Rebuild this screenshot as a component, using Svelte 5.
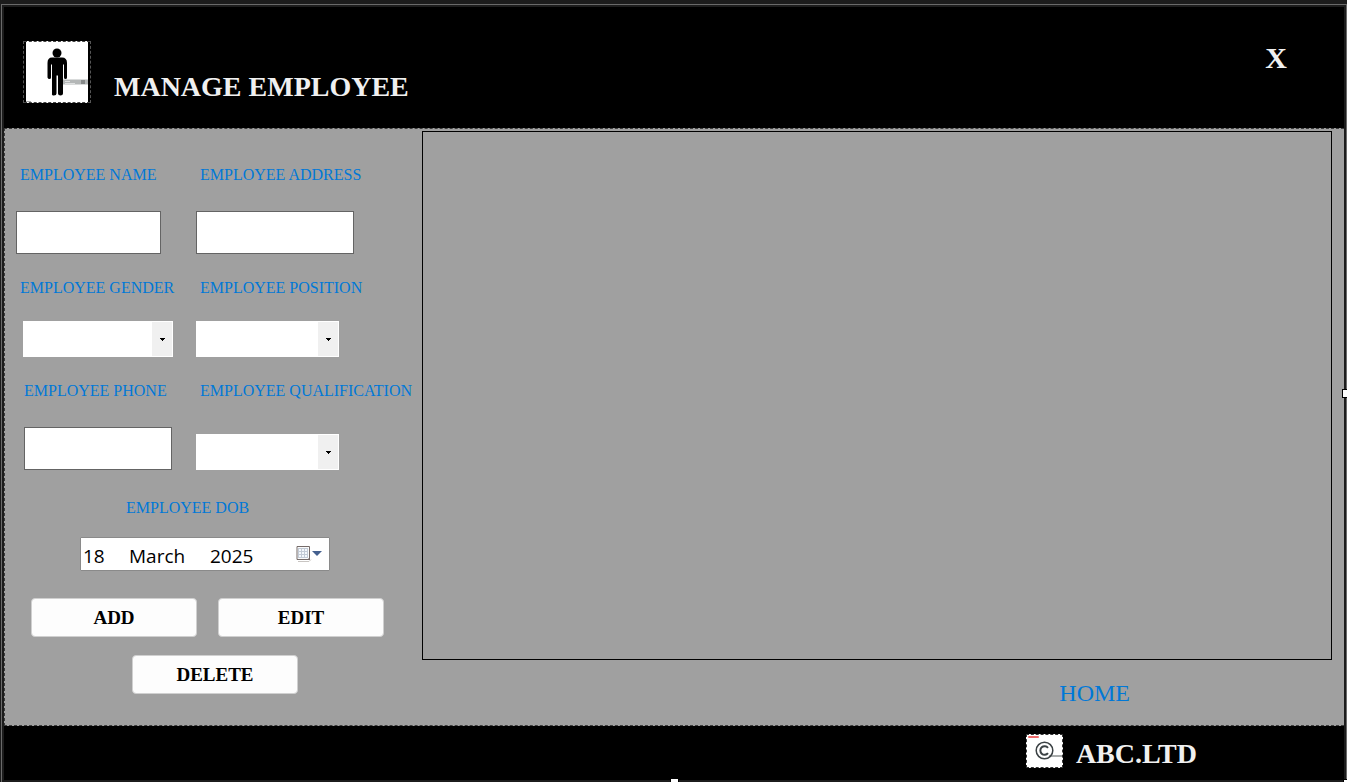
<script>
  let name = $state('');
  let address = $state('');
  let gender = $state('');
  let position = $state('');
  let phone = $state('');
  let qualification = $state('');
  let day = $state('18');
  let month = $state('March');
  let year = $state('2025');
</script>

{#snippet arrow()}
  <svg class="arrow" viewBox="0 0 5 3" width="5" height="3" shape-rendering="crispEdges" aria-hidden="true">
    <path d="M0 0h5v1H4v1H3v1H2V2H1V1H0z" />
  </svg>
{/snippet}

<div class="designer">
  <div class="window">
    <header>
      <div class="logo">
        <svg viewBox="0 0 62 62" width="62" height="62" aria-hidden="true">
          <rect width="62" height="62" fill="#fff" />
          <rect x="37" y="38.500" width="25" height="5" fill="#b4b7b7" />
          <rect x="55" y="39" width="4" height="4" fill="#858888" />
          <path d="M39 40.500h5M39 42.500h10" stroke="#dfe1e1" stroke-width="1" />
          <circle cx="31" cy="12" r="4.500" />
          <path transform="translate(0 .5)" d="M26 16h10q5 0 5 5.500V36q0 1.500-1.500 1.500T38 36V23h-1v29q0 2-2.500 2T32 52V34h-1.500v18q0 2-2.500 2t-2-2V23h-1v13q0 1.500-1.500 1.500T21.500 36V21.500Q21.500 16 26 16z" />
          <path d="M0 60.500h5" stroke="#aaa" />
        </svg>
      </div>
      <h1>MANAGE EMPLOYEE</h1>
      <button class="close" type="button">X</button>
    </header>

    <main>
      <form onsubmit={(e) => e.preventDefault()}>
        <div class="fields">
          <div class="field name">
            <label for="name">EMPLOYEE NAME</label>
            <input id="name" type="text" bind:value={name} />
          </div>
          <div class="field address">
            <label for="address">EMPLOYEE ADDRESS</label>
            <input id="address" type="text" bind:value={address} />
          </div>
          <div class="field gender">
            <label for="gender">EMPLOYEE GENDER</label>
            <span class="combo">
              <select id="gender" bind:value={gender}><option value=""></option></select>
              {@render arrow()}
            </span>
          </div>
          <div class="field">
            <label for="position">EMPLOYEE POSITION</label>
            <span class="combo">
              <select id="position" bind:value={position}><option value=""></option></select>
              {@render arrow()}
            </span>
          </div>
          <div class="field phone">
            <label for="phone">EMPLOYEE PHONE</label>
            <input id="phone" type="text" bind:value={phone} />
          </div>
          <div class="field">
            <label for="qualification">EMPLOYEE QUALIFICATION</label>
            <span class="combo">
              <select id="qualification" bind:value={qualification}><option value=""></option></select>
              {@render arrow()}
            </span>
          </div>
        </div>

        <div class="dob">
          <label for="day">EMPLOYEE DOB</label>
          <div class="picker">
            <input id="day" class="day" type="text" bind:value={day} />
            <input class="month" type="text" bind:value={month} />
            <input class="year" type="text" bind:value={year} />
            <button class="calendar" type="button">
              <svg viewBox="0 0 26 16" width="26" height="16" aria-hidden="true">
                <path d="M2 15.500h11l2-2" fill="none" stroke="#c9c5c2" />
                <path d="M1 .5h12.500v13H1z" fill="#fbfbfb" stroke="#756b69" />
                <rect x="2" y="2" width="10" height="10" fill="#c3cbd6" />
                <path d="M3 3h2v2H3zM6 3h2v2H6zM9 3h2v2H9zM3 6h2v2H3zM6 6h2v2H6zM9 6h2v2H9zM3 9h2v2H3zM6 9h2v2H6zM9 9h2v2H9z" fill="#f4f8fc" />
                <path d="M11 14l3-3v3z" fill="#756b69" />
                <path d="M16 5h10l-5 5z" fill="#44608f" />
              </svg>
            </button>
          </div>
        </div>

        <div class="actions">
          <button type="button">ADD</button>
          <button type="button">EDIT</button>
          <button type="button" class="delete">DELETE</button>
        </div>
      </form>

      <section>
        <div class="grid"></div>
        <a href="#home">HOME</a>
      </section>
    </main>

    <footer>
      <div class="mark">
        <svg viewBox="0 0 35 32" width="35" height="32" aria-hidden="true">
          <rect width="35" height="32" fill="#fff" />
          <rect x="1" y="1" width="11" height="2" rx="1" fill="#ef6a6a" />
          <rect x="22" y="20" width="13" height="2" fill="#a8abab" />
          <circle cx="17.500" cy="15.500" r="8.300" fill="none" stroke="#3b4144" stroke-width="1.500" />
          <path d="M21 12.800a4.300 4.300 0 1 0 0 5.400" fill="none" stroke="#3b4144" stroke-width="2" />
        </svg>
      </div>
      <strong>ABC.LTD</strong>
    </footer>
  </div>
  <i class="handle east"></i>
  <i class="handle south"></i>
  <i class="handle corner"></i>
</div>

<style>
  :global(body) {
    background: #1c1c1c;
  }
  .designer {
    --display: Algerian, "Liberation Serif", serif;
    position: relative;
    box-sizing: border-box;
    min-height: 100vh;
    padding: 4px 0 0 1px;
    display: flex;
    overflow: hidden;
    background: #1c1c1c;
    font-family: var(--display);
  }
  .designer *,
  .designer *::before {
    box-sizing: border-box;
  }
  .window {
    flex: 1;
    display: flex;
    flex-direction: column;
    border: 1px solid #6a6a6a;
    border-bottom: 0;
    padding: 2px;
  }
  button {
    font-family: inherit;
    padding: 0;
    border: 0;
    cursor: pointer;
  }
  header {
    display: flex;
    align-items: flex-end;
    padding: 34px 57px 25px 19px;
    background: #000;
    color: #f0f0f0;
  }
  .logo {
    display: flex;
    padding: 0 2px;
    border: 1px dashed #555;
    border-width: 0 1px;
    background: #000;
    position: relative;
  }
  .logo::before {
    content: "";
    position: absolute;
    inset: 0;
    border: 1px dashed #444;
    border-width: 1px 0;
  }
  h1 {
    margin: 0 0 0 23px;
    font-size: 28px;
    line-height: 32px;
    font-weight: 700;
  }
  .close {
    margin-left: auto;
    align-self: flex-start;
    background: none;
    color: #f0f0f0;
    font-size: 30px;
    line-height: 34px;
    font-weight: 700;
  }
  main {
    flex: 1;
    display: grid;
    grid-template-columns: 417px 1fr;
    background: #a0a0a0;
    border: 1px dashed #3c3c3c;
    border-right: 0;
  }
  form {
    padding: 36px 0 31px 11px;
    color: #0078d7;
  }
  label {
    display: block;
    font-size: 16px;
    line-height: 20px;
    white-space: nowrap;
  }
  .fields {
    display: grid;
    grid-template-columns: 180px 1fr;
    row-gap: 24px;
  }
  .field {
    display: flex;
    flex-direction: column;
    justify-content: space-between;
    align-items: flex-start;
    gap: 23px;
  }
  .field label {
    padding-left: 4px;
  }
  .field > input {
    width: 148px;
    height: 43px;
    margin-top: 3px;
    padding: 0 6px;
    border: 1px solid #646464;
    background: #fff;
    font-size: 16px;
  }
  .name > input {
    width: 145px;
  }
  .address > input {
    width: 158px;
  }
  .combo {
    position: relative;
    display: block;
    width: 143px;
    height: 36px;
  }
  .gender .combo {
    width: 150px;
    margin-left: 7px;
  }
  .phone {
    padding-left: 8px;
  }
  .phone label {
    padding-left: 0;
  }
  select {
    appearance: none;
    width: 100%;
    height: 100%;
    padding: 0 24px 0 6px;
    border: 1px solid #fff;
    border-radius: 0;
    background: linear-gradient(#f0f0f0, #f0f0f0) right / 20px 100% no-repeat #fff;
  }
  .arrow {
    position: absolute;
    right: 8px;
    top: 17px;
    pointer-events: none;
  }
  .dob {
    margin: 28px 0 0 64px;
  }
  .dob label {
    padding-left: 46px;
  }
  .picker {
    display: flex;
    align-items: center;
    width: 250px;
    height: 34px;
    margin-top: 19px;
    padding: 0 7px 0 2px;
    border: 1px solid #8a8a8a;
    border-radius: 1px;
    background: #fff;
  }
  .picker input {
    min-width: 0;
    height: 30px;
    padding: 4px 0 0;
    border: 0;
    background: none;
    color: #000;
    font-family: "Segoe UI", "Open Sans", sans-serif;
    font-size: 19px;
  }
  .day {
    width: 46px;
  }
  .month {
    width: 81px;
  }
  .year {
    width: 60px;
  }
  .calendar {
    display: flex;
    margin-left: auto;
    background: none;
  }
  .actions {
    display: grid;
    grid-template-columns: 166px 166px;
    gap: 18px 21px;
    margin: 27px 0 0 15px;
  }
  .actions button {
    height: 39px;
    border: 1px solid #d0d0d0;
    border-radius: 4px;
    background: #fdfdfd;
    color: #000;
    font-size: 19px;
    font-weight: 700;
  }
  .actions .delete {
    grid-column: 1 / -1;
    width: 166px;
    margin-left: 101px;
  }
  section {
    display: flex;
    flex-direction: column;
    padding: 2px 12px 16px 0;
  }
  .grid {
    flex: 1;
    border: 1px solid #000;
  }
  section a {
    align-self: flex-end;
    margin: 17px 202px 0 0;
    color: #0078d7;
    font-size: 24px;
    line-height: 32px;
    text-decoration: none;
  }
  footer {
    display: flex;
    align-items: flex-start;
    justify-content: flex-end;
    gap: 13px;
    padding: 8px 147px 6px 0;
    background: #000;
    color: #f0f0f0;
  }
  .mark {
    display: flex;
    border: 1px dashed #333;
    background: #fff;
  }
  footer strong {
    font-size: 28px;
    line-height: 40px;
  }
  .handle {
    position: absolute;
    width: 9px;
    height: 9px;
    border: 1px solid #000;
    background: #fff;
  }
  .east {
    right: -4px;
    top: 389px;
  }
  .south {
    left: 670px;
    bottom: -5px;
  }
  .corner {
    right: -5px;
    bottom: -6px;
  }
</style>
